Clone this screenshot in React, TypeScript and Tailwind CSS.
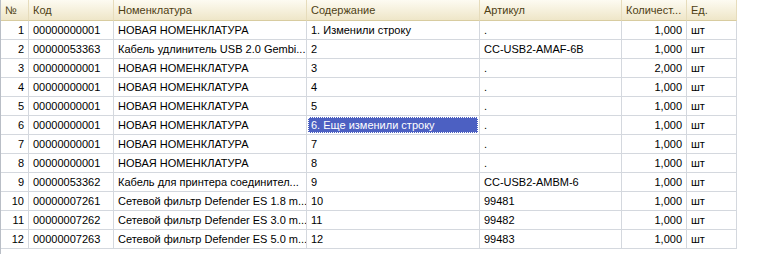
const rows = [
  ["1", "00000000001", "НОВАЯ НОМЕНКЛАТУРА", "1. Изменили строку", ".", "1,000"],
  ["2", "00000053363", "Кабель удлинитель USB 2.0 Gembi...", "2", "CC-USB2-AMAF-6B", "1,000"],
  ["3", "00000000001", "НОВАЯ НОМЕНКЛАТУРА", "3", ".", "2,000"],
  ["4", "00000000001", "НОВАЯ НОМЕНКЛАТУРА", "4", ".", "1,000"],
  ["5", "00000000001", "НОВАЯ НОМЕНКЛАТУРА", "5", ".", "1,000"],
  ["6", "00000000001", "НОВАЯ НОМЕНКЛАТУРА", "6. Еще изменили строку", ".", "1,000"],
  ["7", "00000000001", "НОВАЯ НОМЕНКЛАТУРА", "7", ".", "1,000"],
  ["8", "00000000001", "НОВАЯ НОМЕНКЛАТУРА", "8", ".", "1,000"],
  ["9", "00000053362", "Кабель для принтера соединител...", "9", "CC-USB2-AMBM-6", "1,000"],
  ["10", "00000007261", "Сетевой фильтр Defender ES 1.8 m...", "10", "99481", "1,000"],
  ["11", "00000007262", "Сетевой фильтр Defender ES 3.0 m...", "11", "99482", "1,000"],
  ["12", "00000007263", "Сетевой фильтр Defender ES 5.0 m...", "12", "99483", "1,000"],
];

const grid = "grid grid-cols-[28px_85px_193px_173px_142px_65px_50px]";
const cell =
  "h-[19px] border-r border-b border-[#d4d8de] flex items-center overflow-hidden whitespace-nowrap";
const head =
  "h-[21px] border-r border-b border-r-[#e6dcbc] border-b-[#d8cca0] flex items-center overflow-hidden whitespace-nowrap text-[#4e3f14]";

const App = () => {
  return (
    <div className="w-[768px] h-[254px] bg-white font-['Liberation_Sans',Arial,sans-serif] text-[11px] text-black">
      <div className="h-full w-[737px] border-l border-[#b9bec6]">
        {/* шапка */}
        <div className={`${grid} bg-gradient-to-b from-[#fdfbf2] to-[#eee5c6]`}>
          <div className={`${head} pl-[4px]`}>№</div>
          <div className={`${head} pl-[4px]`}>Код</div>
          <div className={`${head} pl-[4px]`}>Номенклатура</div>
          <div className={`${head} pl-[4px]`}>Содержание</div>
          <div className={`${head} pl-[4px]`}>Артикул</div>
          <div className={`${head} pl-[4px]`}>Количест...</div>
          <div className={`${head} pl-[4px] border-r-[#d4d8de]`}>Ед.</div>
        </div>
        {/* строки */}
        {rows.map((r) => (
          <div key={r[0]} className={grid}>
            <div className={`${cell} justify-end pr-[4px]`}>{r[0]}</div>
            <div className={`${cell} pl-[4px]`}>{r[1]}</div>
            <div className={`${cell} pl-[4px]`}>{r[2]}</div>
            {r[0] === "6" ? (
              <div className={`${cell} p-[1px]`}>
                <div className="h-full w-full bg-[#4c60c2] text-white border border-dotted border-white flex items-center pl-[2px]">
                  {r[3]}
                </div>
              </div>
            ) : (
              <div className={`${cell} pl-[4px]`}>{r[3]}</div>
            )}
            <div className={`${cell} pl-[4px]`}>{r[4]}</div>
            <div className={`${cell} justify-end pr-[4px]`}>{r[5]}</div>
            <div className={`${cell} pl-[4px]`}>шт</div>
          </div>
        ))}
      </div>
    </div>
  );
};

export default App;
